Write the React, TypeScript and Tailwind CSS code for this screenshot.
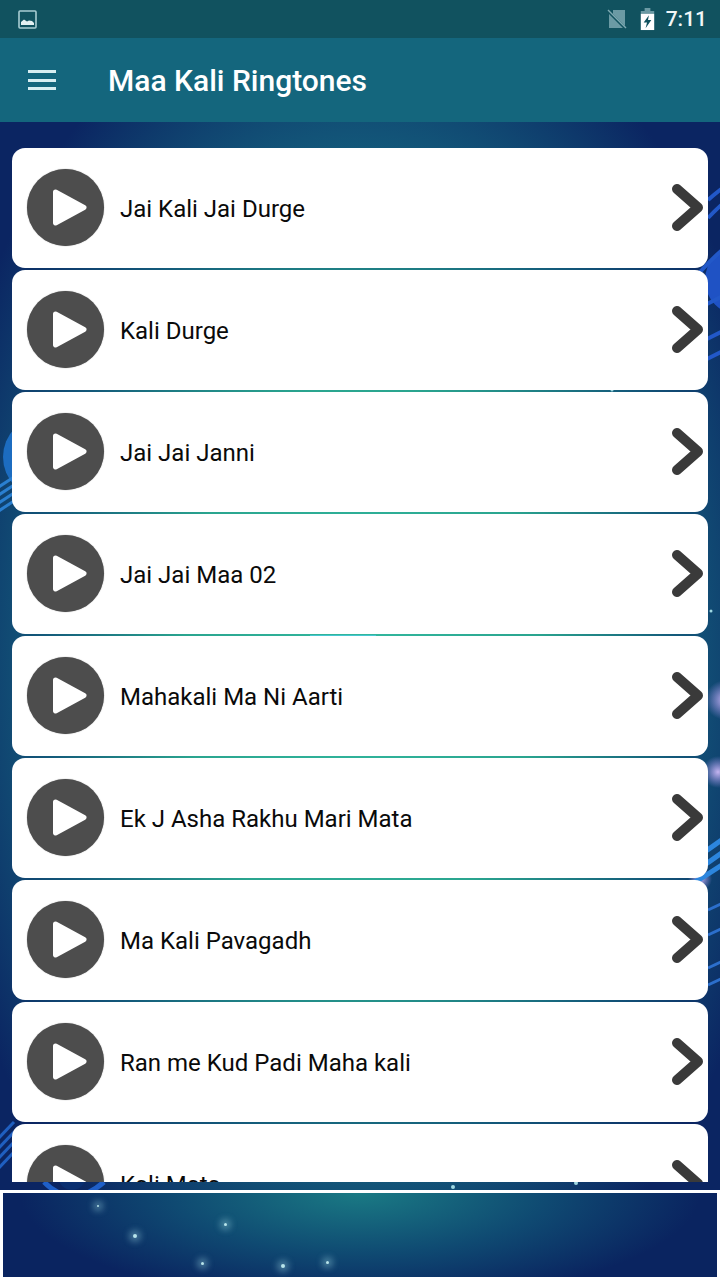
import React from "react";

const songs = [
  "Jai Kali Jai Durge",
  "Kali Durge",
  "Jai Jai Janni",
  "Jai Jai Maa 02",
  "Mahakali Ma Ni Aarti",
  "Ek J Asha Rakhu Mari Mata",
  "Ma Kali Pavagadh",
  "Ran me Kud Padi Maha kali",
  "Kali Mata",
];

const sparkles = [
  { x: 98, y: 1206, r: 2 },
  { x: 135, y: 1236, r: 4 },
  { x: 225, y: 1224, r: 3 },
  { x: 202, y: 1263, r: 3 },
  { x: 283, y: 1266, r: 4 },
  { x: 327, y: 1262, r: 3 },
];

const PlayIcon = () => (
  <div className="mb-[2px] flex h-[77px] w-[77px] shrink-0 items-center justify-center rounded-full bg-[#4d4d4d] shadow-[0_0_1px_rgba(0,0,0,0.6)]">
    <svg width="77" height="77" viewBox="0 0 77 77">
      <path d="M28.5 23 L57 38.5 L28.5 54 Z" fill="#fff" stroke="#fff" strokeWidth="5" strokeLinejoin="round" />
    </svg>
  </div>
);

const ChevronIcon = () => (
  <svg width="36" height="52" viewBox="0 0 36 52" className="shrink-0">
    <path d="M8 5 L29 23.5 L8 42" transform="translate(0 2)" fill="none" stroke="#3a3a3a" strokeWidth="10" strokeLinecap="round" strokeLinejoin="round" />
  </svg>
);

const BackgroundArt = () => (
  <svg className="absolute inset-0" width="720" height="1068" viewBox="0 122 720 1068">
    <defs>
      <radialGradient id="glow">
        <stop offset="0" stopColor="#d9c2ff" stopOpacity="0.9" />
        <stop offset="1" stopColor="#b79bff" stopOpacity="0" />
      </radialGradient>
    </defs>
    <circle cx="44" cy="457" r="41" fill="#1c6cc0" />
    <g fill="none" stroke="#2a7fd0" strokeWidth="3">
      <path d="M-6 490 L14 477" />
      <path d="M-6 498 L14 485" />
      <path d="M-6 506 L14 493" />
      <path d="M-6 514 L14 501" />
    </g>
    <circle cx="740" cy="280" r="35" fill="#1f52c4" />
    <g fill="none" stroke="#2258c8" strokeWidth="4">
      <path d="M708 200 Q725 185 735 180" />
      <path d="M708 218 Q725 200 735 195" />
      <path d="M700 272 Q720 250 735 240" />
      <path d="M705 305 L725 295" />
      <path d="M705 340 L725 330" />
      <path d="M705 360 L725 350" />
    </g>
    <circle cx="725" cy="700" r="20" fill="url(#glow)" />
    <circle cx="718" cy="772" r="16" fill="url(#glow)" />
    <circle cx="700" cy="879" r="12" fill="url(#glow)" />
    <g fill="none" stroke="#2c86de" strokeWidth="5">
      <path d="M700 855 Q715 845 735 830" />
      <path d="M700 868 Q715 858 735 843" />
      <path d="M695 882 Q715 870 735 856" />
    </g>
    <g fill="none" stroke="#2c6fcc" strokeWidth="3">
      <path d="M708 910 L725 902" />
      <path d="M708 935 L725 927" />
      <path d="M708 968 L725 960" />
      <path d="M708 985 L725 977" />
    </g>
    <g fill="none" stroke="#1f5fc0" strokeWidth="3">
      <path d="M-5 1142 L14 1122" />
      <path d="M-5 1152 L14 1132" />
      <path d="M-5 1162 L14 1142" />
      <path d="M-5 1172 L14 1152" />
    </g>
    <path d="M44 1182 Q72 1210 104 1182" fill="none" stroke="#1f5fc8" strokeWidth="5" />
    <circle cx="72" cy="1176" r="14" fill="#0a2f70" />
    <circle cx="453" cy="1187" r="2" fill="#9fd8e2" />
    <circle cx="576" cy="1183" r="2" fill="#9fd8e2" />
    <circle cx="612" cy="390" r="1.5" fill="#9fd8e2" />
    <circle cx="711" cy="611" r="1.5" fill="#9fd8e2" />
    <rect x="310" y="635" width="66" height="2" fill="#46c6d0" />
  </svg>
);

export default function App() {
  return (
    <div className="flex h-[1280px] w-[720px] flex-col overflow-hidden bg-white font-['Roboto',sans-serif]">
      <div className="flex h-[38px] shrink-0 items-center justify-between bg-[#11525f] pl-[18px] pr-[13px]">
        <svg width="19" height="19" viewBox="0 0 19 19">
          <rect x="1" y="1" width="17" height="17" rx="1" fill="none" stroke="#a8cdd3" strokeWidth="1.6" />
          <path d="M3 15 V12 L6 9.5 L9 11.5 L11 10.5 L14 11 L16 13 V15 Z" fill="#e4f0f2" />
        </svg>
        <div className="flex items-center">
          <svg width="20" height="20" viewBox="0 0 20 20" className="mr-[13px]">
            <path d="M6 1 H18 V17 L6 5 Z M2 5 L16 19 H2 Z" fill="#6b9aa4" />
            <path d="M1 1 L19 19" stroke="#7fa9b2" strokeWidth="1.4" />
          </svg>
          <svg width="15" height="23" viewBox="0 0 15 24" className="mr-[11px]">
            <path d="M4.5 0 H10.5 V3 H14.5 V6 H0.5 V3 H4.5 Z" fill="#6b9aa4" />
            <path d="M0.5 6 H14.5 V23 H0.5 Z" fill="#ffffff" />
            <path d="M9 7.5 L3.5 15 H7 L5.5 21 L11.5 12.5 H8 Z" fill="#11525f" />
          </svg>
          <span className="text-[21px] leading-none font-medium text-[#f1f7f8]">7:11</span>
        </div>
      </div>

      <header className="flex h-[84px] shrink-0 items-center bg-[#14667d] pl-[28px]">
        <div className="mr-[52px] flex w-[28px] flex-col gap-[5.5px]">
          <div className="h-[3px] bg-[#d8eef2]" />
          <div className="h-[3px] bg-[#d8eef2]" />
          <div className="h-[3px] bg-[#d8eef2]" />
        </div>
        <h1 className="pt-[1px] text-[30px] leading-[36px] font-medium text-white">Maa Kali Ringtones</h1>
      </header>

      <div className="relative h-[1068px] shrink-0 bg-[radial-gradient(ellipse_440px_700px_at_360px_538px,#32b89e_0%,#2aa58f_40%,#13597a_72%,#0b2562_100%)]">
        <BackgroundArt />
        <div className="relative flex h-[1060px] flex-col gap-[2px] overflow-hidden px-3 pt-[26px]">
          {songs.map((song) => (
            <div key={song} className="flex h-[120px] shrink-0 items-center rounded-[13px] bg-white pl-[15px] pr-[3px]">
              <PlayIcon />
              <span className="ml-[16px] flex-1 pt-[2px] text-[24px] text-[#0a0a0a]">{song}</span>
              <ChevronIcon />
            </div>
          ))}
        </div>
      </div>

      <div className="relative mx-[3px] mt-[3px] h-[84px] bg-[radial-gradient(ellipse_340px_110px_at_357px_0px,#1a7a84_0%,#0f4a72_55%,#0a2460_100%)]">
        {sparkles.map((s) => (
          <span
            key={s.x}
            className="absolute rounded-full bg-[#b8e4ea] shadow-[0_0_6px_4px_rgba(170,225,235,0.35)]"
            style={{ left: s.x - 3 - s.r / 2, top: s.y - 1193 - s.r / 2, width: s.r, height: s.r }}
          />
        ))}
      </div>
    </div>
  );
}
